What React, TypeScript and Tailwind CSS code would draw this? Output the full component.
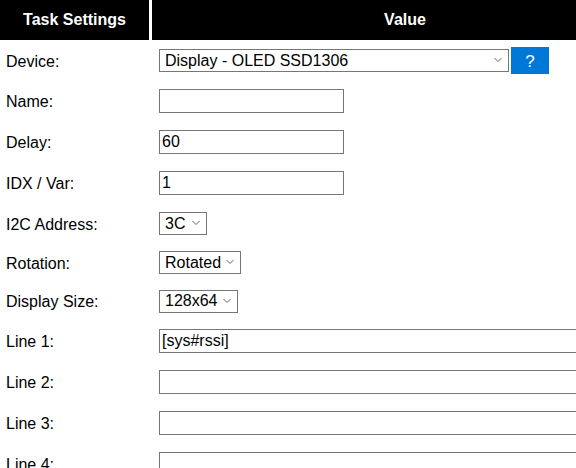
import React from 'react';

const Chevron = () => (
  <svg width="8" height="5" viewBox="0 0 8 5" className="pointer-events-none absolute right-[7px] top-1/2 -translate-y-1/2">
    <path d="M0.5 0.5 L4 4 L7.5 0.5" fill="none" stroke="#666" strokeWidth="1" />
  </svg>
);

const Select = ({ value, width }: { value: string; width: string }) => (
  <div className={`relative h-[23px] ${width}`}>
    <select
      defaultValue={value}
      className="h-full w-full appearance-none border border-[#767676] bg-white pl-[5px] text-[16px] leading-none text-black outline-none"
    >
      <option value={value}>{value}</option>
    </select>
    <Chevron />
  </div>
);

const TextInput = ({ value, width }: { value: string; width: string }) => (
  <input
    type="text"
    defaultValue={value}
    className={`h-[24px] ${width} border border-[#767676] bg-white px-[2px] text-[16px] text-black outline-none`}
  />
);

const Row = ({ label, height, children }: { label: string; height: string; children: React.ReactNode }) => (
  <div className={`flex items-center ${height}`}>
    <div className="w-[152px] shrink-0 pl-[6px] pt-[3px]">{label}</div>
    <div className="flex flex-1 items-center pl-[7px]">{children}</div>
  </div>
);

export default function App() {
  return (
    <div className="h-[468px] w-[576px] overflow-hidden bg-white font-['Liberation_Sans',Arial,sans-serif] text-[16px] text-black">
      <div className="w-[658px]">
        {/* Header */}
        <div className="flex h-[40px] gap-[3px] bg-white">
          <div className="flex w-[149px] items-center justify-center bg-black font-bold text-white">Task Settings</div>
          <div className="flex flex-1 items-center justify-center bg-black font-bold text-white">Value</div>
        </div>

        <Row label="Device:" height="h-[40px]">
          <Select value="Display - OLED SSD1306" width="w-[350px]" />
          <button className="ml-[2px] h-[27px] w-[38px] bg-[#0078d7] pt-[2px] text-[17px] text-white">?</button>
        </Row>
        <Row label="Name:" height="h-[41px]">
          <TextInput value="" width="w-[185px]" />
        </Row>
        <Row label="Delay:" height="h-[41px]">
          <TextInput value="60" width="w-[185px]" />
        </Row>
        <Row label="IDX / Var:" height="h-[41px]">
          <TextInput value="1" width="w-[185px]" />
        </Row>
        <Row label="I2C Address:" height="h-[40px]">
          <Select value="3C" width="w-[48px]" />
        </Row>
        <Row label="Rotation:" height="h-[38px]">
          <Select value="Rotated" width="w-[82px]" />
        </Row>
        <Row label="Display Size:" height="h-[39px]">
          <Select value="128x64" width="w-[79px]" />
        </Row>
        <Row label="Line 1:" height="h-[41px]">
          <TextInput value="[sys#rssi]" width="w-[480px]" />
        </Row>
        <Row label="Line 2:" height="h-[41px]">
          <TextInput value="" width="w-[480px]" />
        </Row>
        <Row label="Line 3:" height="h-[41px]">
          <TextInput value="" width="w-[480px]" />
        </Row>
        <Row label="Line 4:" height="h-[41px]">
          <TextInput value="" width="w-[480px]" />
        </Row>
      </div>
    </div>
  );
}
